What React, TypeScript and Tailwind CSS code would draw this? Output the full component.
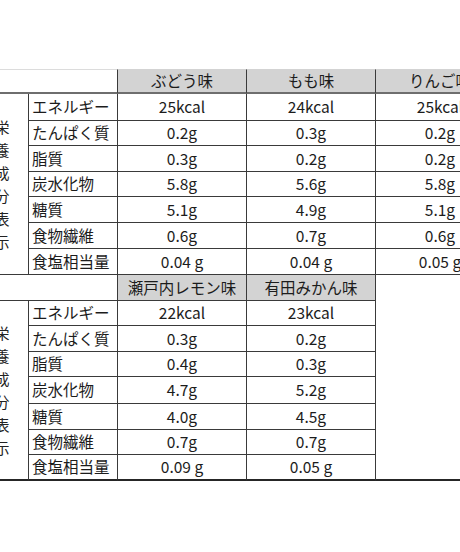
import React from "react";

const LINE = "border-[#3a3a3a]";

type Col = { name: string; values: string[] };

const labels = ["エネルギー", "たんぱく質", "脂質", "炭水化物", "糖質", "食物繊維", "食塩相当量"];

const topCols: Col[] = [
  { name: "ぶどう味", values: ["25kcal", "0.2g", "0.3g", "5.8g", "5.1g", "0.6g", "0.04 g"] },
  { name: "もも味", values: ["24kcal", "0.3g", "0.2g", "5.6g", "4.9g", "0.7g", "0.04 g"] },
  { name: "りんご味", values: ["25kcal", "0.2g", "0.2g", "5.8g", "5.1g", "0.6g", "0.05 g"] },
];

const bottomCols: Col[] = [
  { name: "瀬戸内レモン味", values: ["22kcal", "0.3g", "0.4g", "4.7g", "4.0g", "0.7g", "0.09 g"] },
  { name: "有田みかん味", values: ["23kcal", "0.2g", "0.3g", "5.2g", "4.5g", "0.7g", "0.05 g"] },
];

function SideLabel({ last }: { last: boolean }) {
  return (
    <div
      className={`row-span-7 border-r ${LINE} ${last ? "border-b-2 border-b-[#262626]" : "border-b"} flex items-center`}
    >
      <div className="-ml-[5px] flex flex-col text-[14.5px] leading-[23px] text-[#222]">
        {"栄養成分表示".split("").map((c, i) => (
          <span key={i}>{c}</span>
        ))}
      </div>
    </div>
  );
}

function Rows({ cols, last }: { cols: Col[]; last: boolean }) {
  return (
    <>
      {labels.map((l, r) => {
        const isLast = r === labels.length - 1;
        const bb = isLast && last ? "border-b-2 border-b-[#262626]" : "border-b";
        return (
          <React.Fragment key={l}>
            {r === 0 ? <SideLabel last={last} /> : null}
            <div className={`border-r ${bb} ${LINE} flex items-center pl-[3px] whitespace-nowrap`}>{l}</div>
            {cols.map((c) => (
              <div
                key={c.name}
                className={`border-r ${bb} ${LINE} flex items-center justify-center whitespace-nowrap`}
              >
                {c.values[r]}
              </div>
            ))}
          </React.Fragment>
        );
      })}
    </>
  );
}

export default function App() {
  return (
    <div className="w-[460px] h-[552px] overflow-hidden bg-white font-['Noto_Sans_CJK_JP','Noto_Sans',sans-serif] text-[15.5px] text-[#1c1c1c] leading-none pt-[69px]">
      {/* Top table */}
      <div className="grid w-[505px] grid-cols-[29px_89px_129px_129px_129px] grid-rows-[25px_27px_25px_26px_25px_26px_26px_26px]">
        <div className={`col-span-2 border-t border-t-[#dcdcdc] border-r ${LINE} border-b-2 border-b-[#6e6e6e]`} />
        {topCols.map((c) => (
          <div
            key={c.name}
            className={`bg-[#d3d3d3] border-t border-t-[#d3d3d3] border-r ${LINE} border-b-2 border-b-[#6e6e6e] flex items-center justify-center whitespace-nowrap`}
          >
            {c.name}
          </div>
        ))}
        <Rows cols={topCols} last={false} />
      </div>
      {/* Bottom table */}
      <div className="grid w-[505px] grid-cols-[29px_89px_129px_129px_129px] grid-rows-[26px_25px_26px_25px_27px_26px_25px_26px]">
        <div className={`col-span-2 border-r border-b ${LINE}`} />
        {bottomCols.map((c) => (
          <div
            key={c.name}
            className={`bg-[#d3d3d3] border-r border-b ${LINE} flex items-center justify-center whitespace-nowrap`}
          >
            {c.name}
          </div>
        ))}
        <div className="row-span-8 col-start-5 row-start-1 border-b-2 border-b-[#262626]" />
        <Rows cols={bottomCols} last={true} />
      </div>
    </div>
  );
}
